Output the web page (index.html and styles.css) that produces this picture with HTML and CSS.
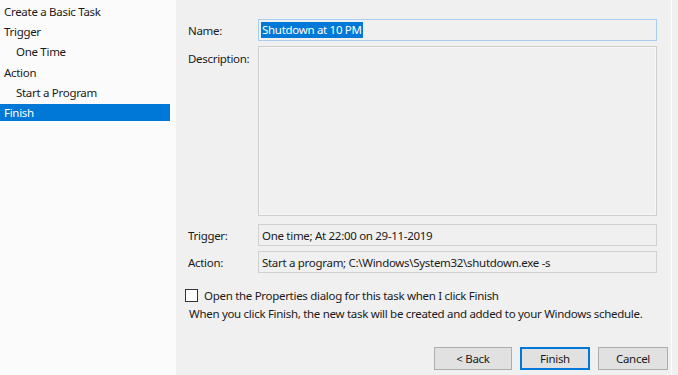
FILE: index.html
```html
<!DOCTYPE html>
<html>
<head>
<meta charset="utf-8">
<link rel="stylesheet" href="styles.css">
</head>
<body>
<div class="wizard">
  <nav class="steps">
    <div class="step">Create a Basic Task</div>
    <div class="step">Trigger</div>
    <div class="step sub">One Time</div>
    <div class="step">Action</div>
    <div class="step sub">Start a Program</div>
    <div class="step active">Finish</div>
  </nav>
  <main class="content">
    <div class="form">
      <label class="lbl">Name:</label>
      <div class="box name-box"><span class="sel">Shutdown at 10 PM</span></div>
      <label class="lbl lbl-top">Description:</label>
      <div class="box desc-box"></div>
      <label class="lbl">Trigger:</label>
      <div class="box ro-box">One time; At 22:00 on 29-11-2019</div>
      <label class="lbl">Action:</label>
      <div class="box ro-box">Start a program; C:\Windows\System32\shutdown.exe -s</div>
    </div>
    <div class="check-row">
      <span class="checkbox"></span>
      <span>Open the Properties dialog for this task when I click Finish</span>
    </div>
    <p class="info">When you click Finish, the new task will be created and added to your Windows schedule.</p>
    <div class="buttons">
      <button class="btn back">&lt; Back</button>
      <button class="btn primary">Finish</button>
      <button class="btn">Cancel</button>
    </div>
  </main>
</div>
</body>
</html>
```
FILE: styles.css
```css
html, body {
  margin: 0;
  padding: 0;
  background: #f0f0f0;
  font-family: "Noto Sans", "Open Sans", sans-serif;
  font-size: 11.5px;
  letter-spacing: -0.3px;
  color: #1a1a1a;
}
.wizard {
  display: flex;
  width: 678px;
  height: 375px;
  overflow: hidden;
}
.steps {
  width: 176px;
  flex: none;
  background: #fbfbfb;
  padding-top: 2.5px;
  box-sizing: border-box;
}
.step {
  width: 170px;
  height: 17px;
  line-height: 17px;
  margin-bottom: 3.4px;
  padding-left: 4px;
  box-sizing: border-box;
  white-space: nowrap;
}
.step.sub { padding-left: 16px; }
.step.active {
  background: #0078d7;
  color: #fff;
}
.content {
  flex: 1;
  padding: 19px 0 0 12px;
  border-right: 1px solid #fdfdfd;
  margin-right: 6px;
  box-sizing: border-box;
}
.form {
  display: grid;
  grid-template-columns: 70px 399px;
  grid-template-rows: 22px 173px 22px 22px;
  row-gap: 5px;
}
.lbl {
  display: flex;
  align-items: center;
}
.lbl-top {
  align-items: flex-start;
  padding-top: 5px;
}
.box {
  box-sizing: border-box;
  border: 1px solid #d4d4d4;
  background: #f0f0f0;
  display: flex;
  align-items: center;
  padding-left: 3px;
  white-space: nowrap;
}
.name-box {
  border-color: #a8cdf0;
  padding-left: 2px;
}
.sel {
  background: #0078d7;
  color: #fff;
  height: 16px;
  line-height: 16px;
  padding: 0 1px;
}
.desc-box {
  align-self: start;
  height: 170px;
  border-color: #cfcfcf;
  box-shadow: inset 0 0 0 1px #f7f7f7;
}
.ro-box { border-color: #d0d0d0; }
.check-row {
  display: flex;
  align-items: center;
  gap: 6px;
  margin-top: 14px;
  margin-left: -3px;
  height: 16px;
}
.checkbox {
  width: 11px;
  height: 11px;
  border: 1px solid #333;
  background: #fff;
  flex: none;
}
.info {
  margin: 3px 0 0 1px;
  line-height: 16px;
}
.buttons {
  display: flex;
  justify-content: flex-end;
  gap: 8px;
  margin-top: 25px;
  padding-right: 3px;
}
.btn {
  font: inherit;
  letter-spacing: inherit;
  color: #1a1a1a;
  width: 70px;
  height: 23px;
  background: #e1e1e1;
  border: 1px solid #adadad;
  padding: 0;
}
.btn.back { width: 78px; }
.btn.primary {
  border: 2px solid #0078d7;
}
```
